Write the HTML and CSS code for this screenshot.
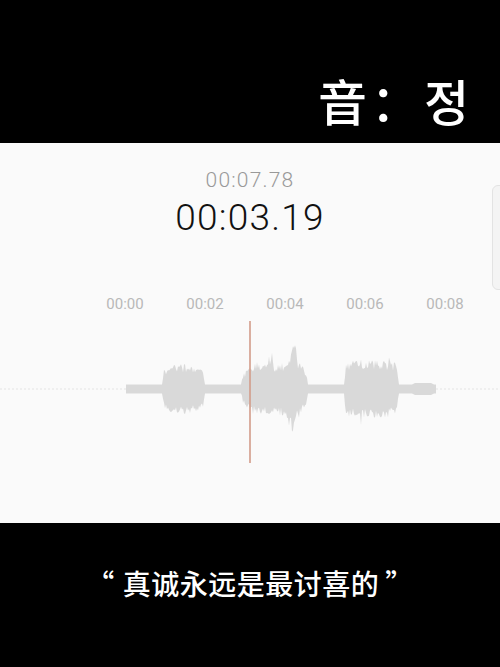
FILE: index.html
```html
<!DOCTYPE html>
<html lang="zh-CN">
<head>
    <meta charset="UTF-8">
    <meta name="viewport" content="width=device-width, initial-scale=1.0">
    <title>录音</title>
    <link rel="stylesheet" href="styles.css">
</head>
<body>
    <div class="header">
        <div class="title">音<span class="colon">：</span>정</div>
    </div>

    <div class="recorder">
        <div class="total-time">00:07.78</div>
        <div class="current-time">00:03.19</div>

        <div class="ruler">
            <span>00:00</span>
            <span>00:02</span>
            <span>00:04</span>
            <span>00:06</span>
            <span>00:08</span>
        </div>

        <svg class="wave" width="500" height="160" viewBox="0 0 500 160">
            <line class="center-line" x1="0" y1="76" x2="500" y2="76"></line>
            <path id="wave-path" class="wave-shape" d=""></path>
            <line class="playhead" x1="250" y1="8" x2="250" y2="150"></line>
        </svg>

        <div class="scroll-handle"></div>
    </div>

    <div class="caption">
        <p><span class="quote-open">“</span>真诚永远是最讨喜的<span class="quote-close">”</span></p>
    </div>

    <script>
        // forma de onda: envelope [x, amplitude] em px, centro em y=76
        const envelope = [
            [126, 4.5], [162, 4.5], [164, 20], [172, 24], [186, 25], [198, 23], [203, 18], [205, 4.5],
            [241, 4.5], [243, 16], [250, 22], [253, 25], [268, 25], [271, 33], [275, 26], [286, 27],
            [290, 38], [293, 46], [296, 34], [300, 27], [306, 18], [308, 4.5],
            [344, 4.5], [346, 27], [360, 30], [382, 29], [396, 27], [399, 4.5],
            [412, 4.5], [415, 6], [431, 6], [434, 4.5], [436, 4.5]
        ];

        let seed = 23;
        function rand() {
            seed = (seed * 16807) % 2147483647;
            return seed / 2147483647;
        }

        function amplitude(x) {
            for (let i = 0; i < envelope.length - 1; i++) {
                const [x0, a0] = envelope[i];
                const [x1, a1] = envelope[i + 1];
                if (x >= x0 && x <= x1) {
                    return a0 + (a1 - a0) * (x - x0) / (x1 - x0);
                }
            }
            return 0;
        }

        function jitter(a) {
            let f = 0.66 + 0.34 * rand();
            if (rand() < 0.1) f += 0.22;
            return a * f;
        }

        const upper = [];
        const lower = [];
        for (let x = 126; x <= 436; x++) {
            const a = amplitude(x);
            let up = a;
            let down = a;
            if (a > 7) {
                up = Math.max(4.5, jitter(a));
                down = Math.max(4.5, jitter(a));
            }
            upper.push(x + ' ' + (76 - up).toFixed(1));
            lower.unshift(x + ' ' + (76 + down).toFixed(1));
        }

        document.getElementById('wave-path').setAttribute('d', 'M' + upper.join(' L') + ' L' + lower.join(' L') + ' Z');
    </script>
</body>
</html>
```

FILE: styles.css
```css
body {
    margin: 0;
    width: 500px;
    height: 667px;
    overflow: hidden;
    background-color: #000;
    font-family: Roboto, "Noto Sans", sans-serif;
}

.header {
    height: 143px;
    background-color: #000;
    display: flex;
    justify-content: flex-end;
    align-items: center;
    padding-right: 31px;
}

.title {
    color: #fff;
    font-family: "Noto Sans CJK SC", sans-serif;
    font-weight: 500;
    font-size: 49px;
    line-height: 60px;
    margin-top: 56px;
}

.title .colon {
    margin-left: 4px;
    margin-right: 4px;
}

.recorder {
    position: relative;
    height: 380px;
    background-color: #fafafa;
    padding-top: 25px;
    box-sizing: border-box;
    overflow: hidden;
}

.total-time {
    text-align: center;
    font-size: 21px;
    font-weight: 300;
    line-height: 24px;
    letter-spacing: 1.2px;
    color: #999;
}

.current-time {
    text-align: center;
    font-size: 37px;
    font-weight: 300;
    line-height: 44px;
    letter-spacing: 1.2px;
    color: #111;
    margin-top: 4px;
}

.ruler {
    display: flex;
    padding-left: 85px;
    margin-top: 56px;
}

.ruler span {
    width: 80px;
    text-align: center;
    font-size: 15px;
    line-height: 16px;
    color: #b8b8b8;
}

.wave {
    display: block;
    margin-top: 1px;
}

.center-line {
    stroke: #e4e4e4;
    stroke-width: 1;
    stroke-dasharray: 2 2;
}

.wave-shape {
    fill: #d9d9d9;
}

.playhead {
    stroke: #d29c8a;
    stroke-width: 1.6;
}

.scroll-handle {
    position: absolute;
    top: 42px;
    left: 492px;
    width: 16px;
    height: 103px;
    border: 1px solid #e3e3e3;
    border-radius: 6px;
    background-color: #f4f4f4;
}

.caption {
    height: 144px;
    background-color: #000;
    display: flex;
    justify-content: center;
    align-items: center;
    padding-bottom: 24px;
    box-sizing: border-box;
}

.caption p {
    margin: 0;
    color: #fff;
    font-family: "Noto Sans CJK SC", sans-serif;
    font-weight: 500;
    font-size: 28px;
    line-height: 36px;
    letter-spacing: 0.5px;
}

.caption .quote-open {
    margin-right: 8px;
}

.caption .quote-close {
    margin-left: 6px;
}
```
